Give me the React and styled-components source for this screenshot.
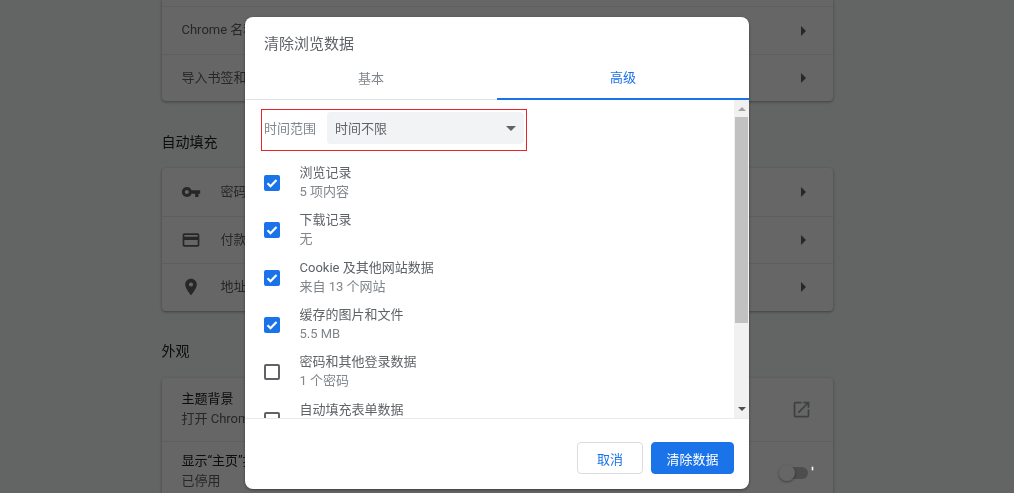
import React from "react";
import styled, { createGlobalStyle } from "styled-components";

const Global = createGlobalStyle`
  html, body { margin: 0; padding: 0; height: 100%; overflow: hidden; background: #f8f9fa; }
  body { font-family: Roboto, "Noto Sans CJK SC", sans-serif; font-size: 13px; }
  * { box-sizing: border-box; }
`;

const Soft = styled.div`
  width: 1014px;
  height: 493px;
  overflow: hidden;
  filter: blur(0.5px);
`;
const Page = styled.main`
  width: 671px;
  margin-left: 162px;
  color: #202124;
`;
const Card = styled.section`
  background: #fff;
  border-radius: 4px;
  box-shadow: 0 1px 2px rgba(60, 64, 67, 0.3), 0 1px 3px 1px rgba(60, 64, 67, 0.15);
`;
const TopCard = styled(Card)`
  border-radius: 0 0 4px 4px;
  padding-top: 6px;
`;
const SectionTitle = styled.h2`
  margin: 0;
  height: 67px;
  padding-top: ${(p) => p.$top || 31}px;
  font-size: 14px;
  line-height: 20px;
  font-weight: 400;
  color: #202124;
  transform: translateX(-0.5px);
`;
const Row = styled.div`
  display: flex;
  align-items: center;
  height: ${(p) => p.$h || 47.5}px;
  padding: 0 20px 0 19.5px;
  border-top: 1px solid #e8eaed;
  color: #5f6368;
`;
const FirstRow = styled(Row)`
  border-top: ${(p) => (p.$line ? "1px solid #e8eaed" : "0")};
`;
const RowIcon = styled.svg`
  width: 20px;
  height: 20px;
  margin-left: -1px;
  margin-right: 20px;
  fill: #5f6368;
  flex: none;
`;
const RowText = styled.div`
  flex: 1;
  line-height: 20px;
  padding-bottom: ${(p) => p.$lift || 0}px;
`;
const RowTitle = styled.div`
  color: #202124;
`;
const RowSub = styled.div`
  color: #5f6368;
`;
const Caret = styled.span`
  width: 0;
  height: 0;
  margin-right: 7px;
  border-top: 5px solid transparent;
  border-bottom: 5px solid transparent;
  border-left: 5px solid #5f6368;
`;
const Popout = styled.svg`
  width: 21px;
  height: 21px;
  margin-right: 1px;
  fill: #9aa0a6;
`;
const Toggle = styled.span`
  position: relative;
  display: block;
  width: 28px;
  height: 12px;
  margin-right: 5px;
  border-radius: 6px;
  background: #bdc1c6;
  &::before {
    content: "";
    position: absolute;
    left: -1px;
    top: -2px;
    width: 16px;
    height: 16px;
    border-radius: 50%;
    background: #fff;
    box-shadow: 0 1px 3px rgba(0, 0, 0, 0.4);
  }
  &::after {
    content: "";
    position: absolute;
    right: -5px;
    top: 0;
    width: 1px;
    height: 3px;
    background: #fff;
    box-shadow: 0 0 0 0.3px #fff;
    z-index: 5;
  }
`;

const Backdrop = styled.div`
  position: fixed;
  inset: 0;
  padding: 17px 0 0 245px;
  background: rgba(0, 0, 0, 0.6);
`;
const Dialog = styled.div`
  display: flex;
  flex-direction: column;
  width: 504px;
  height: 472px;
  border-radius: 8px;
  background: #fff;
  overflow: hidden;
  box-shadow: 0 1px 3px rgba(0, 0, 0, 0.4);
  color: #202124;
`;
const DialogTitle = styled.h1`
  margin: 0;
  height: 43px;
  padding: 16px 0 0 19px;
  font-size: 15px;
  line-height: 22px;
  font-weight: 400;
  color: #5f6368;
`;
const Tabs = styled.div`
  display: flex;
  height: 40px;
  border-bottom: 1px solid #e0e2e5;
`;
const Tab = styled.div`
  flex: 1;
  height: 40px;
  padding-top: ${(p) => (p.$active ? 8 : 9)}px;
  line-height: 20px;
  text-align: center;
  color: ${(p) => (p.$active ? "#1a73e8" : "#80868b")};
  border-bottom: 2px solid ${(p) => (p.$active ? "#1a73e8" : "transparent")};
`;
const ScrollArea = styled.div`
  display: flex;
  height: 318px;
  min-height: 0;
`;
const List = styled.div`
  flex: 1;
  min-width: 0;
  overflow: hidden;
  padding: 9px 0 0 16px;
`;
const RangeBox = styled.div`
  display: flex;
  align-items: center;
  width: 266px;
  height: 42px;
  padding: 0 2px 4px 2px;
  border: 1px solid #e8242a;
  margin-bottom: 8.5px;
`;
const RangeLabel = styled.span`
  width: 63px;
  padding-bottom: 2px;
  color: #80868b;
`;
const Select = styled.div`
  display: flex;
  align-items: center;
  justify-content: space-between;
  width: 197px;
  height: 32px;
  padding: 0 8px 2px 8px;
  border-radius: 4px;
  background: #f1f3f4;
  color: #5f6368;
`;
const SelectArrow = styled.span`
  width: 0;
  height: 0;
  margin-top: 3px;
  border-left: 5px solid transparent;
  border-right: 5px solid transparent;
  border-top: 5px solid #5f6368;
`;
const Item = styled.div`
  display: flex;
  align-items: center;
  height: 47.3px;
  padding-left: 3px;
`;
const Check = styled.span`
  display: flex;
  align-items: center;
  justify-content: center;
  flex: none;
  width: 16px;
  height: 16px;
  margin-right: 19.5px;
  border-radius: 2px;
  background: ${(p) => (p.$on ? "#1a73e8" : "#fff")};
  border: ${(p) => (p.$on ? "0" : "2px solid #5f6368")};
`;
const CheckMark = styled.svg`
  width: 12px;
  height: 12px;
  fill: none;
  stroke: #fff;
  stroke-width: 2.2;
`;
const ItemText = styled.div`
  line-height: 19px;
  padding-bottom: 2px;
`;
const ItemTitle = styled.div`
  color: #5f6368;
`;
const ItemSub = styled.div`
  color: #80868b;
`;
const Scrollbar = styled.div`
  display: flex;
  flex-direction: column;
  align-items: center;
  flex: none;
  width: 15px;
  background: #f1f1f1;
`;
const ScrollUp = styled.span`
  width: 0;
  height: 0;
  margin: 7px 0 6px;
  border-left: 4px solid transparent;
  border-right: 4px solid transparent;
  border-bottom: 4px solid #a3a3a3;
`;
const Thumb = styled.div`
  width: 13px;
  height: 206px;
  background: #c1c1c1;
`;
const ScrollDown = styled.span`
  width: 0;
  height: 0;
  margin-top: auto;
  margin-bottom: 7px;
  border-left: 4px solid transparent;
  border-right: 4px solid transparent;
  border-top: 4px solid #505050;
`;
const Footer = styled.div`
  display: flex;
  justify-content: flex-end;
  gap: 8px;
  flex: 1;
  padding: 23px 15px 0 0;
  border-top: 1px solid #e8eaed;
`;
const Button = styled.button`
  height: 32px;
  width: ${(p) => p.$w}px;
  padding: 0;
  border-radius: 4px;
  font: inherit;
  font-size: 13px;
  border: 1px solid ${(p) => (p.$primary ? "#1a73e8" : "#dadce0")};
  background: ${(p) => (p.$primary ? "#1a73e8" : "#fff")};
  color: ${(p) => (p.$primary ? "#fff" : "#1a73e8")};
`;

const items = [
  ["浏览记录", "5 项内容", true],
  ["下载记录", "无", true],
  ["Cookie 及其他网站数据", "来自 13 个网站", true],
  ["缓存的图片和文件", "5.5 MB", true],
  ["密码和其他登录数据", "1 个密码", false],
  ["自动填充表单数据", "", false],
];

export default function App() {
  return (
    <Soft>
      <Global />
      <Page>
        <TopCard>
          <FirstRow $line $h={48}>
            <RowText $lift={2}>Chrome 名称和照片</RowText>
            <Caret />
          </FirstRow>
          <Row $h={47}>
            <RowText>导入书签和设置</RowText>
            <Caret />
          </Row>
        </TopCard>
        <SectionTitle>自动填充</SectionTitle>
        <Card>
          <FirstRow>
            <RowIcon viewBox="0 0 24 24">
              <path d="M12.65 10A6 6 0 0 0 7 6a6 6 0 0 0 0 12 6 6 0 0 0 5.65-4H17v4h4v-4h2v-4H12.65zM7 14.5a2.5 2.5 0 1 1 0-5 2.5 2.5 0 0 1 0 5z" />
            </RowIcon>
            <RowText>密码</RowText>
            <Caret />
          </FirstRow>
          <Row>
            <RowIcon viewBox="0 0 24 24">
              <path d="M20 4H4c-1.1 0-2 .9-2 2v12c0 1.1.9 2 2 2h16c1.1 0 2-.9 2-2V6c0-1.1-.9-2-2-2zm0 14H4v-6h16v6zm0-10H4V6h16v2z" />
            </RowIcon>
            <RowText>付款方式</RowText>
            <Caret />
          </Row>
          <Row>
            <RowIcon viewBox="0 0 24 24">
              <path d="M12 2C8.13 2 5 5.13 5 9c0 5.25 7 13 7 13s7-7.75 7-13c0-3.87-3.13-7-7-7zm0 9.5a2.5 2.5 0 1 1 0-5 2.5 2.5 0 0 1 0 5z" />
            </RowIcon>
            <RowText>地址和其他信息</RowText>
            <Caret />
          </Row>
        </Card>
        <SectionTitle $top={30}>外观</SectionTitle>
        <Card>
          <FirstRow $h={63}>
            <RowText>
              <RowTitle>主题背景</RowTitle>
              <RowSub>打开 Chrome 网上应用店</RowSub>
            </RowText>
            <Popout viewBox="0 0 24 24">
              <path d="M19 19H5V5h7V3H5a2 2 0 0 0-2 2v14a2 2 0 0 0 2 2h14a2 2 0 0 0 2-2v-7h-2v7zM14 3v2h3.59l-9.83 9.83 1.41 1.41L19 6.41V10h2V3h-7z" />
            </Popout>
          </FirstRow>
          <Row $h={63}>
            <RowText $lift={3}>
              <RowTitle>显示“主页”按钮</RowTitle>
              <RowSub>已停用</RowSub>
            </RowText>
            <Toggle />
          </Row>
        </Card>
      </Page>
      <Backdrop>
        <Dialog>
          <DialogTitle>清除浏览数据</DialogTitle>
          <Tabs>
            <Tab>基本</Tab>
            <Tab $active>高级</Tab>
          </Tabs>
          <ScrollArea>
            <List>
              <RangeBox>
                <RangeLabel>时间范围</RangeLabel>
                <Select>
                  时间不限
                  <SelectArrow />
                </Select>
              </RangeBox>
              {items.map(([title, sub, on]) => (
                <Item key={title}>
                  <Check $on={on}>
                    {on && (
                      <CheckMark viewBox="0 0 12 12">
                        <path d="M1.5 6.2l3 3 6-6.2" />
                      </CheckMark>
                    )}
                  </Check>
                  <ItemText>
                    <ItemTitle>{title}</ItemTitle>
                    <ItemSub>{sub || "\u00a0"}</ItemSub>
                  </ItemText>
                </Item>
              ))}
            </List>
            <Scrollbar>
              <ScrollUp />
              <Thumb />
              <ScrollDown />
            </Scrollbar>
          </ScrollArea>
          <Footer>
            <Button $w={66}>取消</Button>
            <Button $w={83} $primary>
              清除数据
            </Button>
          </Footer>
        </Dialog>
      </Backdrop>
    </Soft>
  );
}
